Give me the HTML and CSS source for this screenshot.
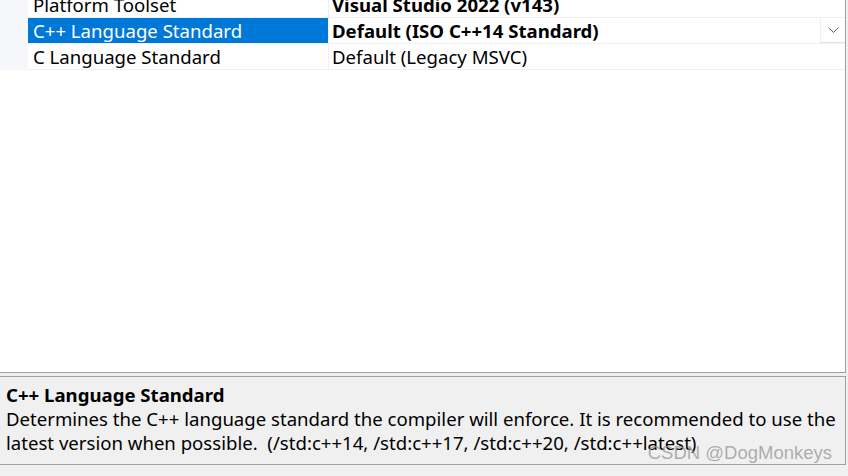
FILE: index.html
```html
<!DOCTYPE html>
<html>
<head>
<meta charset="utf-8">
<link rel="stylesheet" href="styles.css">
</head>
<body>
<div class="app">
  <div class="grid">
    <div class="rows">
      <div class="row">
        <div class="gutter"></div>
        <div class="name">Platform Toolset</div>
        <div class="value bold">Visual Studio 2022 (v143)</div>
      </div>
      <div class="row">
        <div class="gutter"></div>
        <div class="name selected">C++ Language Standard</div>
        <div class="value bold">Default (ISO C++14 Standard)
          <span class="drop"><svg width="11" height="6" viewBox="0 0 11 6"><path d="M0.5 0.5 L5.5 5.5 L10.5 0.5" fill="none" stroke="#606060" stroke-width="1"/></svg></span>
        </div>
      </div>
      <div class="row">
        <div class="gutter"></div>
        <div class="name">C Language Standard</div>
        <div class="value">Default (Legacy MSVC)</div>
      </div>
    </div>
  </div>
  <div class="desc">
    <div class="desc-title">C++ Language Standard</div>
    <div class="desc-text">Determines the C++ language standard the compiler will enforce. It is recommended to use the latest version when possible.&nbsp; (/std:c++14, /std:c++17, /std:c++20, /std:c++latest)</div>
    <div class="watermark">CSDN @DogMonkeys</div>
  </div>
</div>
</body>
</html>
```

FILE: styles.css
```css
html, body {
  margin: 0;
  padding: 0;
  background: #f0f0f0;
}
.app {
  width: 848px;
  height: 476px;
  background: #f0f0f0;
  font-family: "Noto Sans", "Open Sans", sans-serif;
  font-size: 18.6px;
  color: #000;
  overflow: hidden;
}
.grid {
  width: 845px;
  height: 372px;
  background: #fff;
  border-right: 1px solid #a0a0a0;
  border-bottom: 1px solid #a0a0a0;
  overflow: hidden;
}
.rows {
  margin-top: -8px;
}
.row {
  display: flex;
  height: 25px;
  border-bottom: 1px solid #f0f0f0;
}
.gutter {
  width: 28px;
  background: #f5f7fa;
  margin-bottom: -1px;
  height: 26px;
}
.name {
  width: 295px;
  padding-left: 5px;
  line-height: 25px;
  white-space: nowrap;
  border-right: 1px solid #f0f0f0;
}
.name.selected {
  background: #0078d7;
  color: #fff;
}
.value {
  flex: 1;
  position: relative;
  padding-left: 3px;
  line-height: 25px;
  white-space: nowrap;
}
.bold {
  font-weight: 700;
}
.drop {
  position: absolute;
  right: 0;
  top: 0;
  width: 24px;
  height: 24px;
  background: #fff;
  border-left: 1px solid #f0f0f0;
  border-bottom: 1px solid #e4e4e4;
  display: flex;
  align-items: center;
  justify-content: center;
}
.desc {
  position: relative;
  margin-top: 3px;
  border-top: 1px solid #a0a0a0;
  border-right: 1px solid #a0a0a0;
  border-bottom: 1px solid #a0a0a0;
  background: #f0f0f0;
  padding: 0 0 0 6px;
  box-sizing: border-box;
  width: 846px;
  height: 89px;
}
.desc-title {
  font-weight: 700;
  line-height: 24px;
  padding-top: 6px;
}
.desc-text {
  line-height: 24px;
  width: 836px;
}
.watermark {
  position: absolute;
  right: 13px;
  bottom: -1px;
  color: rgba(150, 150, 150, 0.75);
  font-size: 18.5px;
  line-height: 24px;
  font-family: "Liberation Sans", sans-serif;
}
```
